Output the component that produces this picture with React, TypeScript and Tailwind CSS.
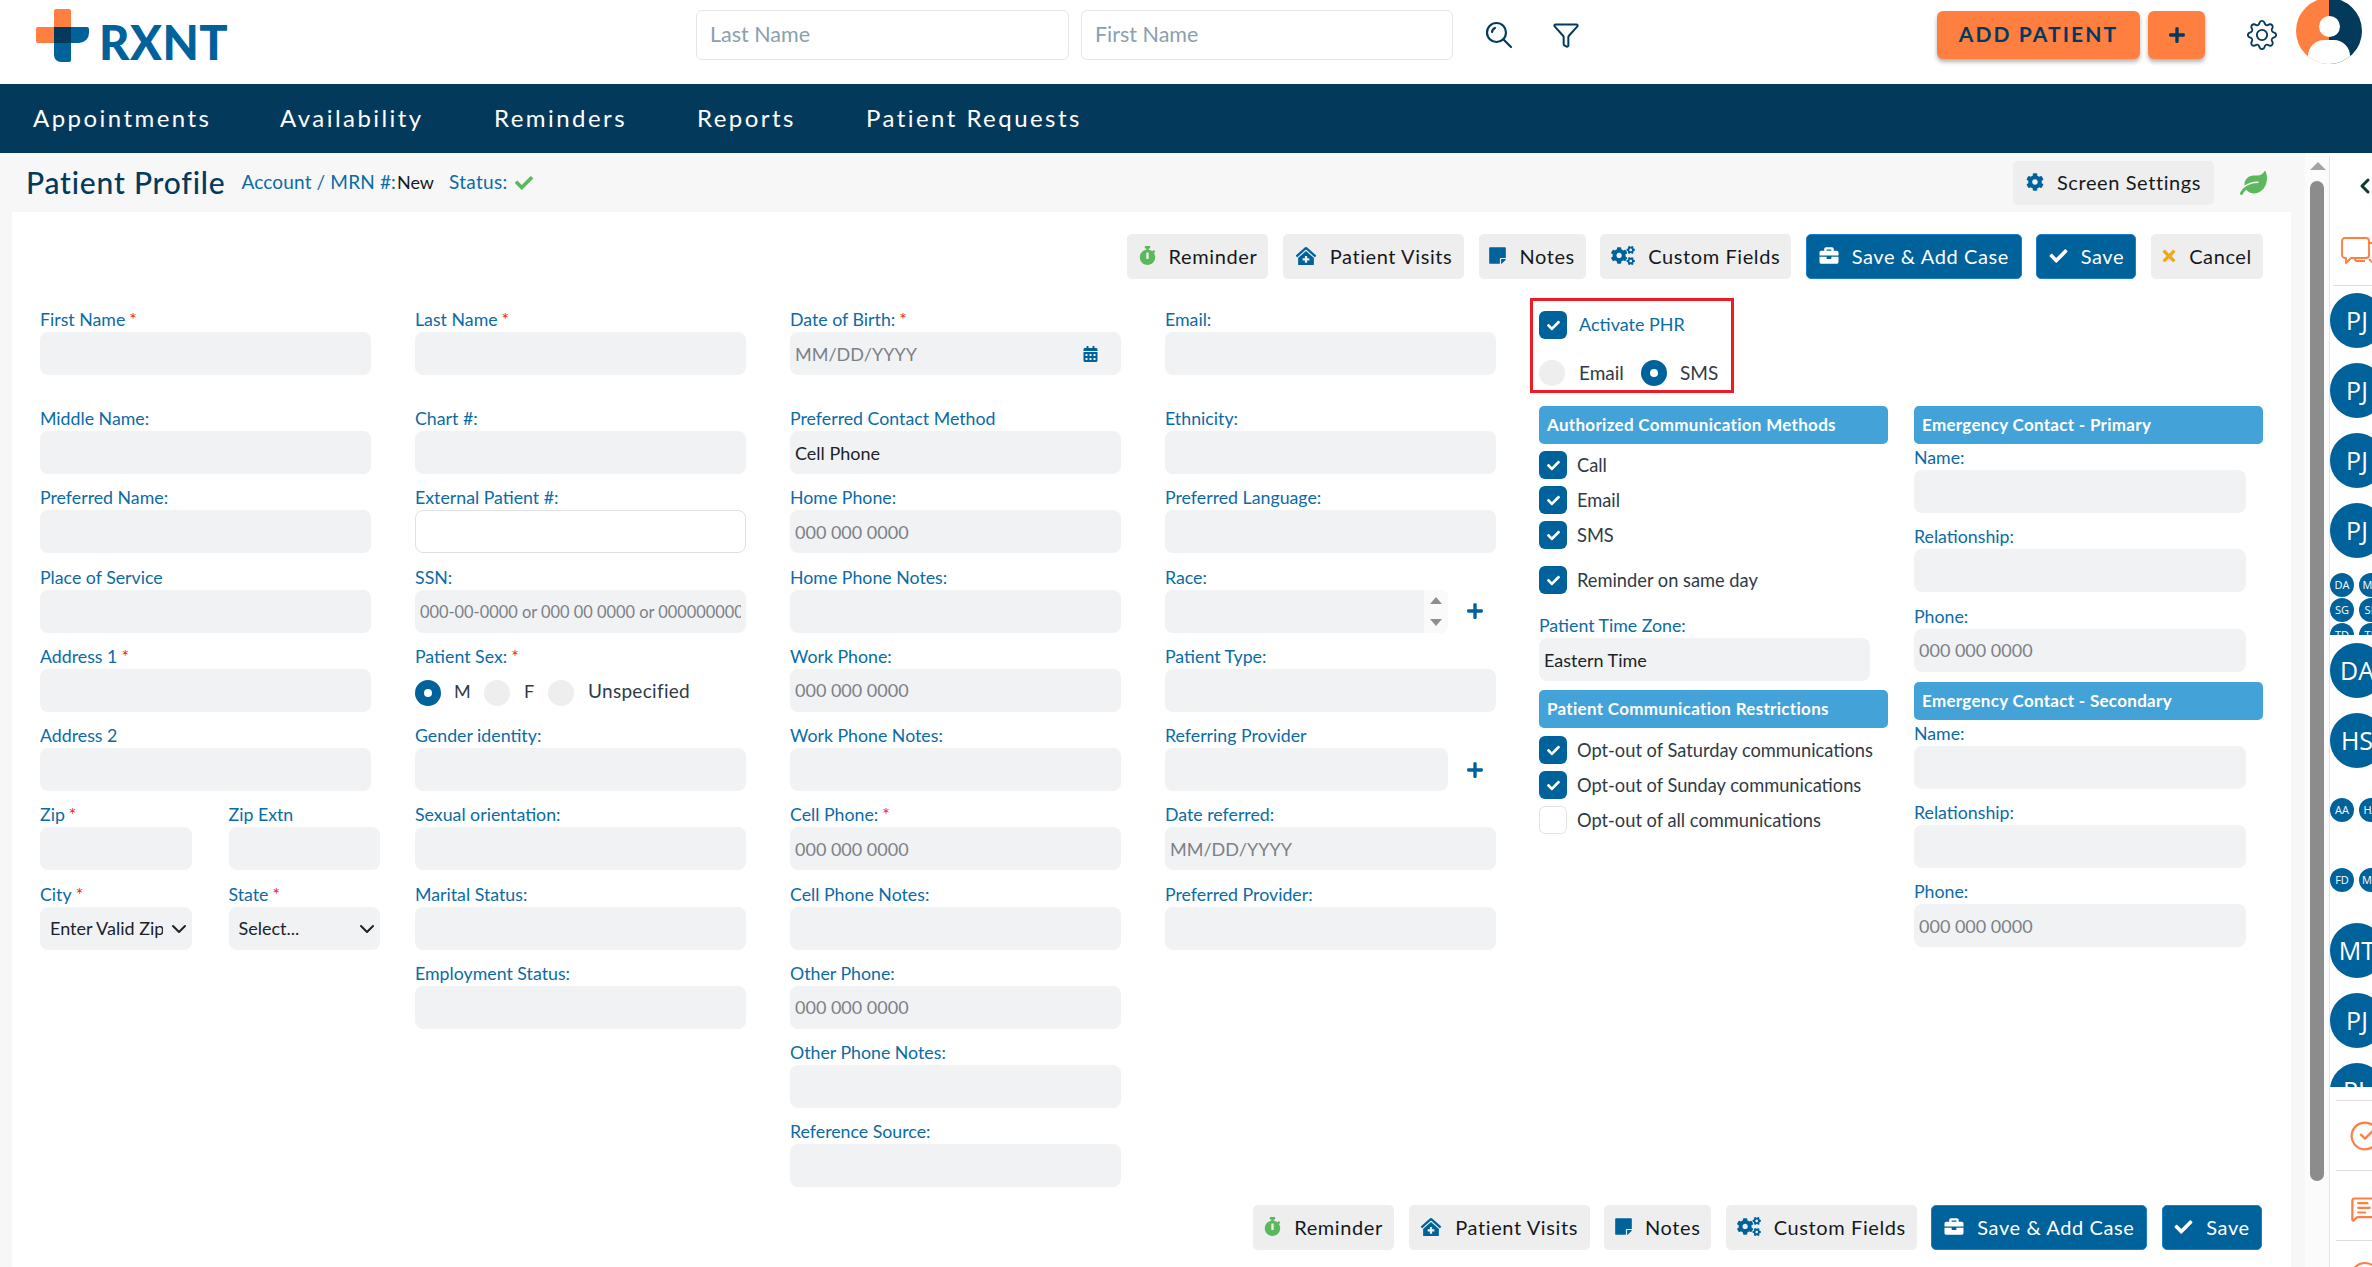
import type { ReactNode } from "react";
import { FaBriefcase, FaCalendarAlt, FaCheck, FaClinicMedical, FaCog, FaCogs, FaLeaf, FaPlus, FaStickyNote, FaStopwatch, FaTimes } from "react-icons/fa";
import { BsGear } from "react-icons/bs";
import { ChevronDown, ChevronLeft, CircleCheckBig, Funnel, MessageSquareText } from "lucide-react";

type FieldDef = {
  label: string;
  req?: boolean;
  ph?: string;
  value?: string;
  white?: boolean;
};

const col1: FieldDef[] = [
  { label: "Middle Name:" },
  { label: "Preferred Name:" },
  { label: "Place of Service" },
  { label: "Address 1", req: true },
  { label: "Address 2" },
];

const col3: FieldDef[] = [
  { label: "Preferred Contact Method", value: "Cell Phone" },
  { label: "Home Phone:", ph: "000 000 0000" },
  { label: "Home Phone Notes:" },
  { label: "Work Phone:", ph: "000 000 0000" },
  { label: "Work Phone Notes:" },
  { label: "Cell Phone:", req: true, ph: "000 000 0000" },
  { label: "Cell Phone Notes:" },
  { label: "Other Phone:", ph: "000 000 0000" },
  { label: "Other Phone Notes:" },
  { label: "Reference Source:" },
];

function Label({ text, req }: { text: string; req?: boolean }) {
  return (
    <div className="h-6 text-[17.75px] leading-[22px] text-[#0b6ba6] whitespace-nowrap">
      {text}
      {req && <span className="ml-1 text-[#f01c1c]">*</span>}
    </div>
  );
}

function TextBox({ ph, value, white }: { ph?: string; value?: string; white?: boolean }) {
  return (
    <input
      readOnly
      placeholder={ph}
      value={value ?? ""}
      className={`block h-[43px] w-full rounded-lg px-[5px] text-[#1c2228] outline-none placeholder:text-[#7c8187] ${
        ph && ph.length > 20 ? "text-[16.4px]" : "text-[18px]"
      } ${white ? "border border-[#dfe1e4] bg-white" : "bg-[#f1f2f4]"}`}
    />
  );
}

function Field({ label, req, ph, value, white }: FieldDef) {
  return (
    <div className="h-[79.25px]">
      <Label text={label} req={req} />
      <TextBox ph={ph} value={value} white={white} />
    </div>
  );
}

function FirstField({ label, children }: { label: string; children: ReactNode }) {
  return (
    <div className="h-[99px]">
      <Label text={label} req={label !== "Email:"} />
      {children}
    </div>
  );
}

function SelectBox({ value }: { value: string }) {
  return (
    <div className="relative h-[43px] w-full">
      <select className="h-full w-full appearance-none rounded-lg bg-[#f1f2f4] pl-[10px] pr-[29px] text-[18px] text-[#1c2228] outline-none">
        <option>{value}</option>
      </select>
      <ChevronDown className="absolute right-px top-[10px] h-6 w-6 text-[#1c2228]" strokeWidth={2} />
    </div>
  );
}

function Check({ on = true }: { on?: boolean }) {
  return (
    <span
      className={`flex h-7 w-7 shrink-0 items-center justify-center rounded-[6px] ${
        on ? "bg-[#00629b]" : "border border-[#e2e3e6] bg-white"
      }`}
    >
      {on && <FaCheck className="h-[13px] w-[13px] text-white" />}
    </span>
  );
}

function Radio({ on }: { on?: boolean }) {
  return (
    <span
      className={`flex h-[26px] w-[26px] shrink-0 items-center justify-center rounded-full ${
        on ? "bg-[#00629b]" : "bg-[#eeeeee]"
      }`}
    >
      {on && <span className="h-2 w-2 rounded-full bg-white" />}
    </span>
  );
}

function CheckRow({ text, on, className }: { text: string; on?: boolean; className?: string }) {
  return (
    <div className={`flex h-7 items-center gap-[10px] text-[18.25px] text-[#2f3a46] ${className ?? ""}`}>
      <Check on={on} />
      <span className="whitespace-nowrap pt-[2px]">{text}</span>
    </div>
  );
}

function SectionHead({ text }: { text: string }) {
  return (
    <div className="flex h-[38px] items-center rounded-[5px] bg-[#43a3d9] pl-2 text-[17px] font-bold tracking-[0.3px] text-white">
      {text}
    </div>
  );
}

function ToolBtn({ icon, text, w, primary }: { icon: ReactNode; text: string; w: string; primary?: boolean }) {
  return (
    <button
      className={`flex h-[45px] items-center justify-center gap-[13px] rounded-[5px] pb-[2px] text-[20px] tracking-[0.6px] ${w} ${
        primary ? "border border-[#1b7fd0] bg-[#00629b] text-white" : "bg-[#eeeeee] text-[#15191d]"
      }`}
    >
      {icon}
      {text}
    </button>
  );
}

function Toolbar({ cancel }: { cancel?: boolean }) {
  return (
    <div className="flex justify-end gap-[14.6px]">
      <ToolBtn w="w-[141px]" text="Reminder" icon={<FaStopwatch className="h-[19px] w-[17px] text-[#5cb85c]" />} />
      <ToolBtn w="w-[181px]" text="Patient Visits" icon={<FaClinicMedical className="h-[18px] w-[22px] text-[#00629b]" />} />
      <ToolBtn w="w-[107px]" text="Notes" icon={<FaStickyNote className="h-[19px] w-[17px] text-[#00629b]" />} />
      <ToolBtn w="w-[191px]" text="Custom Fields" icon={<FaCogs className="h-[19px] w-[24px] text-[#00629b]" />} />
      <ToolBtn w="w-[216px]" text="Save & Add Case" primary icon={<FaBriefcase className="h-[19px] w-[20px] text-white" />} />
      <ToolBtn w="w-[100px]" text="Save" primary icon={<FaCheck className="h-[18px] w-[19px] text-white" />} />
      {cancel && <ToolBtn w="w-[112px]" text="Cancel" icon={<FaTimes className="h-[18px] w-[14px] text-[#f0a818]" />} />}
    </div>
  );
}

function Logo() {
  return (
    <div className="ml-9 flex items-center">
      <svg width="53" height="53" viewBox="0 0 53 53" className="-mt-[14px] shrink-0">
        <path d="M18 2a2 2 0 0 1 2-2h13a2 2 0 0 1 2 2v32H2a2 2 0 0 1-2-2V20a2 2 0 0 1 2-2h16z" fill="#ff7f41" />
        <path d="M18 18h33a2 2 0 0 1 2 2v4a10 10 0 0 1-10 10h-8v17a2 2 0 0 1-2 2h-8a7 7 0 0 1-7-7z" fill="#00629b" />
        <rect x="18" y="18" width="17" height="16" fill="#033a5c" />
      </svg>
      <span className="ml-[10px] text-[47px] leading-none font-black tracking-[0.5px] text-[#00629b]">RXNT</span>
    </div>
  );
}

function BigAvatar({ text }: { text: string }) {
  return (
    <div className="mb-[15px] flex h-[55px] w-[54px] items-center justify-center rounded-full bg-[#00629b] font-['Open_Sans',sans-serif] text-[25px] text-white">
      {text}
    </div>
  );
}

function SmallAvatars({ left, right }: { left: string; right: string }) {
  return (
    <div className="flex w-[60px] gap-[5px]">
      {[left, right].map((t) => (
        <div key={t} className="flex h-6 w-6 shrink-0 items-center justify-center rounded-full bg-[#00629b] font-['Open_Sans',sans-serif] text-[11px] text-white">
          {t}
        </div>
      ))}
    </div>
  );
}

export default function App() {
  return (
    <div className="flex h-[1267px] w-[2372px] flex-col overflow-hidden bg-white font-['Lato',sans-serif]">
      {/* Header */}
      <header className="relative flex h-[84px] shrink-0 items-center">
        <Logo />
        <div className="absolute left-[696px] top-[10px] flex items-center gap-3">
          <input readOnly placeholder="Last Name" className="h-[50px] w-[373px] rounded-md border border-[#e3e5e7] px-[13px] pb-[2px] text-[21.5px] outline-none placeholder:text-[#8aa0ae]" />
          <input readOnly placeholder="First Name" className="h-[50px] w-[372px] rounded-md border border-[#e3e5e7] px-[13px] pb-[2px] text-[21.5px] outline-none placeholder:text-[#8aa0ae]" />
          <svg width="28" height="28" viewBox="0 0 28 28" fill="none" stroke="#033a5c" strokeWidth="2.2" strokeLinecap="round" className="ml-5">
            <circle cx="11.5" cy="11.5" r="9.5" />
            <path d="M18.5 18.5 26 26M7 11a5 5 0 0 1 3-4" />
          </svg>
          <Funnel className="ml-[27px] h-[28px] w-[28px] text-[#033a5c]" strokeWidth={1.7} />
        </div>
        <div className="absolute left-[1937px] top-[11px] flex gap-2">
          <button className="h-[48px] w-[203px] rounded-md bg-[#ff7f41] pb-[2px] text-[21px] font-bold tracking-[2.1px] text-[#033a5c] shadow-[0_3px_4px_rgba(0,0,0,0.3)]">ADD PATIENT</button>
          <button className="flex h-[48px] w-[57px] items-center justify-center rounded-md bg-[#ff7f41] text-[#033a5c] shadow-[0_3px_4px_rgba(0,0,0,0.3)]">
            <FaPlus className="h-[18px] w-[18px]" />
          </button>
        </div>
        <BsGear className="absolute left-[2247px] top-[20px] h-[30px] w-[30px] text-[#033a5c]" />
        <div className="absolute left-[2296px] top-[-2px] h-[66px] w-[66px] overflow-hidden rounded-full bg-[linear-gradient(90deg,#ff7f41_50%,#033a5c_50%)]">
          <div className="absolute left-[23px] top-[18px] h-[21px] w-[21px] rounded-full bg-white" />
          <div className="absolute left-[12px] top-[42px] h-[30px] w-[42px] rounded-t-2xl bg-white" />
        </div>
      </header>

      {/* Nav */}
      <nav className="flex h-[69px] shrink-0 items-center bg-[#033a5c] pb-[2px] pl-[33px] text-[24px] tracking-[2.45px] text-white">
        <a className="w-[247px]">Appointments</a>
        <a className="w-[214px]">Availability</a>
        <a className="w-[203px]">Reminders</a>
        <a className="w-[169px]">Reports</a>
        <a>Patient Requests</a>
      </nav>

      <div className="flex min-h-0 flex-1">
        {/* Main */}
        <main className="flex w-[2305px] shrink-0 flex-col bg-[#f7f7f7]">
          <div className="flex h-[59px] shrink-0 items-center pl-[26px] pr-[38px]">
            <h1 className="text-[30px] font-medium tracking-[0.8px] text-[#033a5c]">Patient Profile</h1>
            <span className="ml-4 text-[19px] tracking-[0.15px] text-[#0b6ba6]">Account / MRN #:</span>
            <span className="ml-[1px] text-[18px] text-[#15191d]">New</span>
            <span className="ml-[15px] text-[19px] tracking-[0.3px] text-[#0b6ba6]">Status:</span>
            <FaCheck className="ml-[7px] h-[18px] w-[18px] text-[#5cb85c]" />
            <button className="ml-auto flex h-[44px] w-[201px] items-center justify-center gap-[13px] rounded-[5px] bg-[#eeeeee] pb-[2px] text-[20px] tracking-[0.6px] text-[#15191d]">
              <FaCog className="h-[18px] w-[18px] text-[#00629b]" />
              Screen Settings
            </button>
            <FaLeaf className="ml-[26px] h-[24px] w-[27px] text-[#5cb85c]" />
          </div>

          <div className="ml-3 flex-1 w-[2279px] bg-white pt-[22px]">
            <div className="pr-[28px]">
              <Toolbar cancel />
            </div>

            <div className="mt-[29px] flex h-[897px] pl-[28px]">
              {/* Column 1 */}
              <div className="w-[331px] shrink-0">
                <FirstField label="First Name"><TextBox /></FirstField>
                {col1.map((f) => <Field key={f.label} {...f} />)}
                <div className="flex w-[340px] gap-[37px]">
                  <div className="w-[152px]">
                    <Field label="Zip" req />
                    <Label text="City" req />
                    <SelectBox value="Enter Valid Zip" />
                  </div>
                  <div className="w-[152px]">
                    <Field label="Zip Extn" />
                    <Label text="State" req />
                    <SelectBox value="Select..." />
                  </div>
                </div>
              </div>

              {/* Column 2 */}
              <div className="ml-[44px] w-[331px] shrink-0">
                <FirstField label="Last Name"><TextBox /></FirstField>
                <Field label="Chart #:" />
                <Field label="External Patient #:" white />
                <Field label="SSN:" ph="000-00-0000 or 000 00 0000 or 000000000" />
                <div className="h-[79.25px]">
                  <Label text="Patient Sex:" req />
                  <div className="mt-2 flex items-center text-[18px] text-[#2f3a46]">
                    <Radio on />
                    <span className="ml-[13px] w-[30px] pb-1">M</span>
                    <Radio />
                    <span className="ml-[14px] w-[24px] pb-1">F</span>
                    <Radio />
                    <span className="ml-[14px] pb-1 text-[19px] tracking-[0.3px]">Unspecified</span>
                  </div>
                </div>
                <Field label="Gender identity:" />
                <Field label="Sexual orientation:" />
                <Field label="Marital Status:" />
                <Field label="Employment Status:" />
              </div>

              {/* Column 3 */}
              <div className="ml-[44px] w-[331px] shrink-0">
                <FirstField label="Date of Birth:">
                  <div className="relative">
                    <TextBox ph="MM/DD/YYYY" />
                    <FaCalendarAlt className="absolute right-[23px] top-[14px] h-[16px] w-[15px] text-[#00629b]" />
                  </div>
                </FirstField>
                {col3.map((f) => <Field key={f.label} {...f} />)}
              </div>

              {/* Column 4 */}
              <div className="ml-[44px] w-[331px] shrink-0">
                <FirstField label="Email:"><TextBox /></FirstField>
                <Field label="Ethnicity:" />
                <Field label="Preferred Language:" />
                <div className="h-[79.25px]">
                  <Label text="Race:" />
                  <div className="flex items-center">
                    <div className="flex h-[43px] w-[283px] overflow-hidden rounded-lg bg-[#f1f2f4]">
                      <div className="flex-1" />
                      <div className="flex w-6 flex-col items-center justify-center gap-[15px] bg-[#fafafa]">
                        <span className="h-0 w-0 border-x-[6px] border-b-[7px] border-x-transparent border-b-[#8f8f8f]" />
                        <span className="h-0 w-0 border-x-[6px] border-t-[7px] border-x-transparent border-t-[#8f8f8f]" />
                      </div>
                    </div>
                    <FaPlus className="ml-[18px] h-[18px] w-[18px] text-[#00629b]" />
                  </div>
                </div>
                <Field label="Patient Type:" />
                <div className="h-[79.25px]">
                  <Label text="Referring Provider" />
                  <div className="flex items-center">
                    <div className="w-[283px]"><TextBox /></div>
                    <FaPlus className="ml-[18px] h-[18px] w-[18px] text-[#00629b]" />
                  </div>
                </div>
                <Field label="Date referred:" ph="MM/DD/YYYY" />
                <Field label="Preferred Provider:" />
              </div>

              {/* Right section */}
              <div className="ml-[43px] w-[724px] shrink-0">
                <div className="-mt-[10px] ml-[-9px] flex h-[95px] w-[204px] flex-col border-[3px] border-[#ed1c24] pl-[6px] pt-[10px]">
                  <div className="flex h-7 items-center gap-[12px] text-[18px] text-[#0b6ba6]">
                    <Check />
                    <span className="pb-[2px]">Activate PHR</span>
                  </div>
                  <div className="mt-[21px] flex h-[26px] items-center text-[19px] text-[#2f3a46]">
                    <Radio />
                    <span className="ml-[14px] w-[62px]">Email</span>
                    <Radio on />
                    <span className="ml-[13px]">SMS</span>
                  </div>
                </div>

                <div className="mt-[13px] flex gap-[26px]">
                  <div className="w-[349px] shrink-0">
                    <SectionHead text="Authorized Communication Methods" />
                    <CheckRow className="mt-[7px]" text="Call" on />
                    <CheckRow className="mt-[7px]" text="Email" on />
                    <CheckRow className="mt-[7px]" text="SMS" on />
                    <CheckRow className="mt-[17px]" text="Reminder on same day" on />
                    <div className="mt-5">
                      <Label text="Patient Time Zone:" />
                      <div className="w-[331px]"><TextBox value="Eastern Time" /></div>
                    </div>
                    <div className="mt-[9px]"><SectionHead text="Patient Communication Restrictions" /></div>
                    <CheckRow className="mt-2" text="Opt-out of Saturday communications" on />
                    <CheckRow className="mt-[7px]" text="Opt-out of Sunday communications" on />
                    <CheckRow className="mt-[7px]" text="Opt-out of all communications" on={false} />
                  </div>

                  <div className="w-[349px] shrink-0">
                    <SectionHead text="Emergency Contact - Primary" />
                    <div className="mt-[2px] w-[332px]">
                      <Field label="Name:" />
                      <Field label="Relationship:" />
                      <Field label="Phone:" ph="000 000 0000" />
                    </div>
                    <div className="mt-[-2px]"><SectionHead text="Emergency Contact - Secondary" /></div>
                    <div className="mt-[2px] w-[332px]">
                      <Field label="Name:" />
                      <Field label="Relationship:" />
                      <Field label="Phone:" ph="000 000 0000" />
                    </div>
                  </div>
                </div>
              </div>
            </div>

            <div className="pr-[29px]">
              <Toolbar />
            </div>
          </div>
        </main>

        {/* Scrollbar */}
        <div className="w-6 shrink-0 bg-[#fbfbfb] px-[5px] pt-[9px]">
          <div className="mx-auto h-0 w-0 border-x-[8px] border-b-[8px] border-x-transparent border-b-[#a3a3a3]" />
          <div className="mt-[11px] h-[1000px] rounded-full bg-[#8c8c8c]" />
        </div>

        {/* Right rail */}
        <aside className="mt-[3px] flex w-[43px] shrink-0 flex-col overflow-hidden border-l border-[#e6e6e6] bg-white">
          <div className="h-[130px] shrink-0">
            <ChevronLeft className="ml-[23px] mt-[18px] h-[24px] w-[24px] text-[#0d3b2e]" strokeWidth={3} />
            <svg width="40" height="31" viewBox="0 0 40 31" fill="none" stroke="#ff7f41" strokeWidth="1.9" strokeLinejoin="round" className="ml-[11px] mt-[39px]">
              <path d="M4 1h21a3 3 0 0 1 3 3v14a3 3 0 0 1-3 3H10l-5 5v-5H4a3 3 0 0 1-3-3V4a3 3 0 0 1 3-3z" />
              <path d="M28 6h8a3 3 0 0 1 3 3v10a3 3 0 0 1-3 3h-1v7l-7-7M14 21v1a2 2 0 0 0 2 2h8" />
            </svg>
            <div className="ml-[3px] mt-[17px] w-[60px] border-t border-[#dddddd]" />
          </div>
          <div className="h-[801px] shrink-0 overflow-hidden">
            <div className="mt-[7px]">
              <BigAvatar text="PJ" />
              <BigAvatar text="PJ" />
              <BigAvatar text="PJ" />
              <BigAvatar text="PJ" />
            </div>
            <div className="h-[62px] overflow-hidden">
              <div className="flex flex-col gap-px">
                <SmallAvatars left="DA" right="MA" />
                <SmallAvatars left="SG" right="SK" />
                <SmallAvatars left="TD" right="TK" />
              </div>
            </div>
            <div className="mt-[8px]">
              <BigAvatar text="DA" />
              <BigAvatar text="HS" />
            </div>
            <div className="mt-[30px]"><SmallAvatars left="AA" right="HA" /></div>
            <div className="mt-[46px]"><SmallAvatars left="FD" right="MD" /></div>
            <div className="mt-[31px]">
              <BigAvatar text="MT" />
              <BigAvatar text="PJ" />
              <BigAvatar text="PL" />
            </div>
          </div>
          <div className="shrink-0 pt-[13px]">
            <div className="ml-[6px] h-[70px] w-[60px] border-t border-[#dddddd]">
              <CircleCheckBig className="ml-[13px] mt-[19px] h-[32px] w-[32px] text-[#ff7f41]" strokeWidth={1.7} />
            </div>
            <div className="ml-[6px] h-[70px] w-[60px] border-t border-[#dddddd]">
              <MessageSquareText className="ml-[13px] mt-[24px] h-[28px] w-[30px] text-[#ff7f41]" strokeWidth={1.9} />
            </div>
            <div className="ml-[6px] h-[70px] w-[60px] border-t border-[#dddddd]">
              <div className="ml-[14px] mt-[21px] h-[30px] w-[30px] rounded-full border-2 border-[#ff7f41]" />
            </div>
          </div>
        </aside>
      </div>
    </div>
  );
}
